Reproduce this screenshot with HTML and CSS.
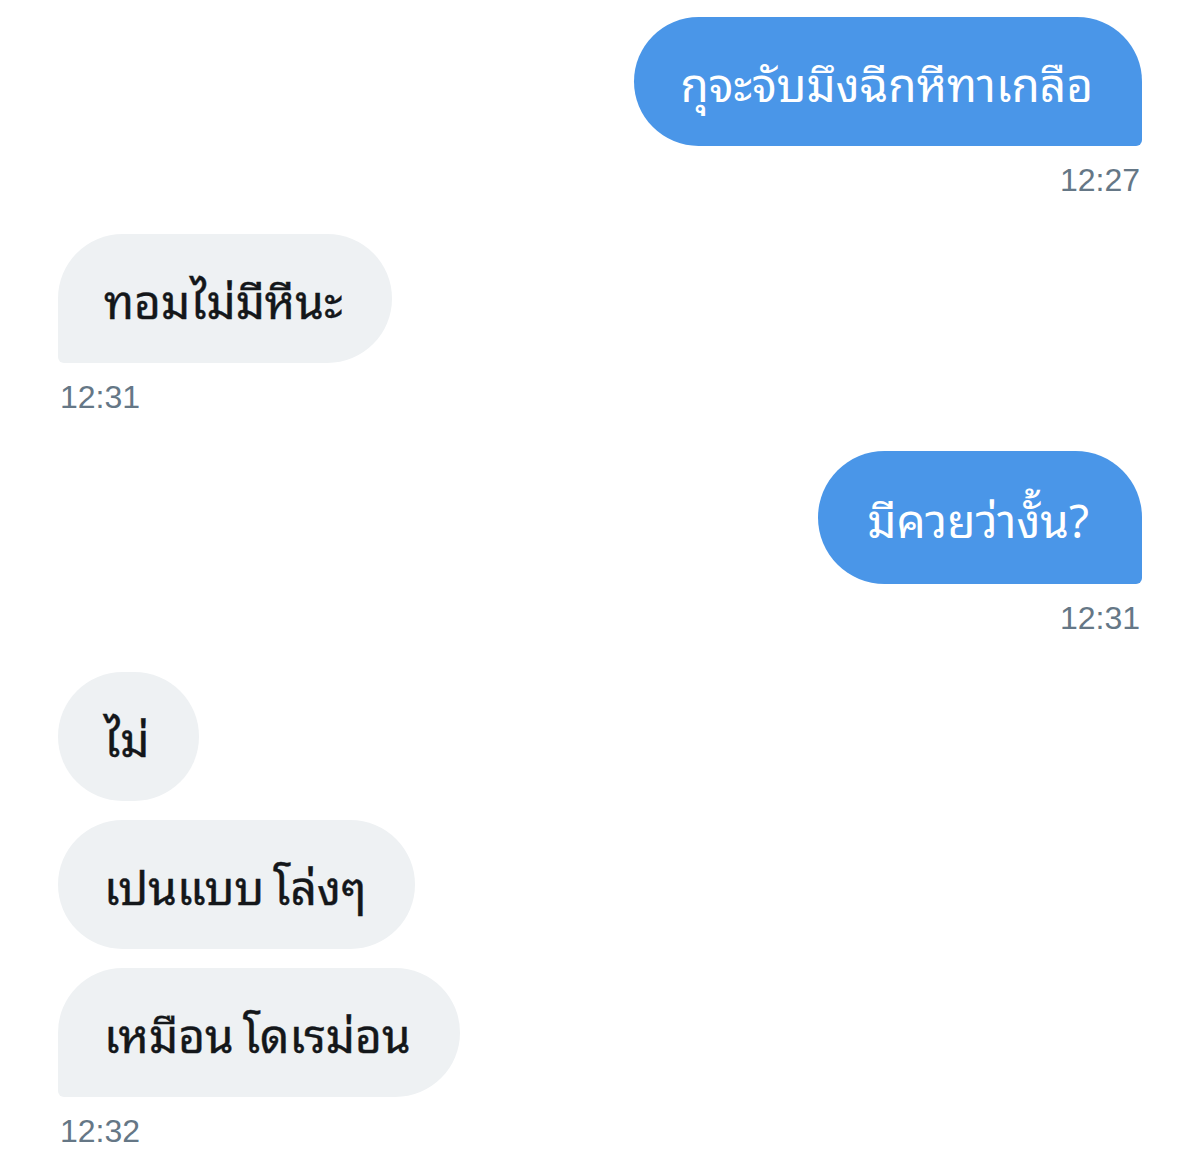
FILE: index.html
```html
<!DOCTYPE html>
<html lang="th">
<head>
<meta charset="utf-8">
<title>Chat</title>
<link rel="stylesheet" href="styles.css">
</head>
<body>
<div class="chat">
  <div class="group sent">
    <div class="bubble last">กุจะจับมึงฉีกหีทาเกลือ</div>
    <div class="time">12:27</div>
  </div>
  <div class="group received">
    <div class="bubble last">ทอมไม่มีหีนะ</div>
    <div class="time">12:31</div>
  </div>
  <div class="group sent">
    <div class="bubble last tall">มีควยว่างั้น?</div>
    <div class="time">12:31</div>
  </div>
  <div class="group received">
    <div class="bubble">ไม่</div>
    <div class="bubble">เปนแบบ&thinsp;โล่งๆ</div>
    <div class="bubble last">เหมือน&thinsp;โดเรม่อน</div>
    <div class="time">12:32</div>
  </div>
</div>
</body>
</html>
```
FILE: styles.css
```css
html, body {
  margin: 0;
  padding: 0;
  background: #ffffff;
}
.chat {
  padding: 17px 58px 0 58px;
  display: flex;
  flex-direction: column;
  gap: 36px;
  font-family: "Noto Sans Thai Looped", "Liberation Sans", sans-serif;
}
.group {
  display: flex;
  flex-direction: column;
  gap: 19px;
}
.group.sent { align-items: flex-end; }
.group.received { align-items: flex-start; }
.bubble {
  font-size: 46px;
  font-weight: 400;
  line-height: 129px;
  height: 129px;
  padding: 0 49px 0 46px;
  border-radius: 65px;
  box-sizing: border-box;
  white-space: nowrap;
}
.bubble.tall {
  height: 133px;
  line-height: 133px;
  padding: 0 53px 0 49px;
  border-radius: 67px;
}
.sent .bubble {
  background: #4a96e8;
  color: #ffffff;
}
.sent .bubble.last { border-bottom-right-radius: 6px; }
.received .bubble {
  background: #eef1f3;
  color: #14171a;
  -webkit-text-stroke: 0.4px #14171a;
}
.received .bubble.last { border-bottom-left-radius: 6px; }
.time {
  font-family: "Liberation Sans", Arial, sans-serif;
  font-size: 32px;
  line-height: 36px;
  color: #657786;
  margin-top: -3px;
  padding: 0 2px;
}
```
